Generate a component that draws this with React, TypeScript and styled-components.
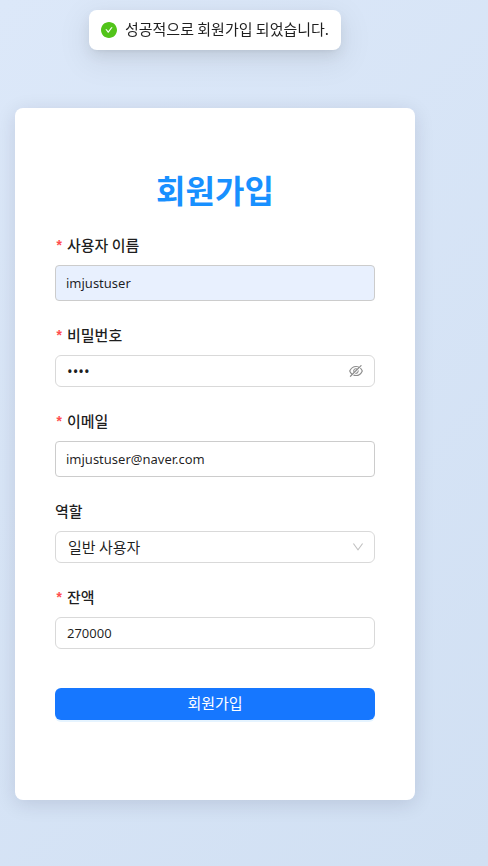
import React, { useState } from "react";
import styled, { createGlobalStyle, css } from "styled-components";

const fontStack = '"Noto Sans", "Noto Sans CJK KR", sans-serif';

const GlobalStyle = createGlobalStyle`
  *, *::before, *::after { box-sizing: border-box; }
  body {
    margin: 0;
    font-family: "Noto Sans CJK KR", sans-serif;
    color: rgba(0, 0, 0, 0.88);
  }
`;

const Page = styled.main`
  min-height: 100vh;
  padding: 108px 73px 66px 15px;
  background: linear-gradient(135deg, #dce8f9 0%, #d1e0f3 100%);
`;

const ToastLayer = styled.div`
  position: fixed;
  top: 10px;
  left: 15px;
  right: 73px;
  display: flex;
  justify-content: center;
`;

const Toast = styled.div`
  display: flex;
  align-items: center;
  gap: 8px;
  height: 40px;
  padding: 0 12px;
  border-radius: 8px;
  background: #fff;
  font-size: 15px;
  line-height: 20px;
  white-space: nowrap;
  box-shadow: 0 6px 16px rgba(0, 0, 0, 0.08), 0 3px 6px -4px rgba(0, 0, 0, 0.12),
    0 9px 28px 8px rgba(0, 0, 0, 0.05);
`;

const ToastText = styled.span`
  padding-bottom: 2px;
`;

const Card = styled.form`
  display: flex;
  flex-direction: column;
  gap: 24px;
  max-width: 400px;
  margin: 0 auto;
  padding: 60px 40px 80px;
  border-radius: 8px;
  background: #fff;
  box-shadow: 0 4px 20px rgba(0, 0, 50, 0.12);
`;

const Title = styled.h1`
  margin: 0;
  color: #1890ff;
  font-size: 32px;
  font-weight: 700;
  line-height: 43px;
  text-align: center;
`;

const Field = styled.div`
  display: flex;
  flex-direction: column;
  gap: 8px;
`;

const Label = styled.label`
  display: flex;
  gap: 4px;
  padding-bottom: 2px;
  font-size: 15px;
  font-weight: 500;
  line-height: 20px;
`;

const Asterisk = styled.span`
  width: 8px;
  padding-top: 4px;
  color: #ff4d4f;
  font-family: "Liberation Mono", monospace;
  font-size: 14px;
  font-weight: 700;
  line-height: 16px;
`;

const controlBox = css`
  width: 100%;
  border: 1px solid #d9d9d9;
  border-radius: 6px;
  background: #fff;
  color: rgba(0, 0, 0, 0.88);
  outline: none;
`;

const Input = styled.input<{ $tall?: boolean; $filled?: boolean }>`
  ${controlBox}
  height: ${(p) => (p.$tall ? 36 : 32)}px;
  padding: 0 ${(p) => (p.$tall ? 10 : 11)}px;
  border-radius: ${(p) => (p.$tall ? 4 : 6)}px;
  border-color: ${(p) => (p.$tall ? "#ccc" : "#d9d9d9")};
  background: ${(p) => (p.$filled ? "#e8f0fe" : "#fff")};
  font-family: ${fontStack};
  font-size: 13px;
`;

const PasswordBox = styled.div`
  ${controlBox}
  display: flex;
  align-items: center;
  height: 32px;
  padding: 0 11px;
`;

const PasswordInput = styled.input`
  flex: 1;
  min-width: 0;
  padding: 0;
  border: 0;
  outline: none;
  background: transparent;
  color: inherit;
  font-family: ${fontStack};
  font-size: 15px;
`;

const EyeButton = styled.button`
  display: flex;
  padding: 0;
  border: 0;
  background: none;
  color: rgba(0, 0, 0, 0.45);
  cursor: pointer;
`;

const SelectBox = styled.div`
  display: grid;
  align-items: center;

  & > * { grid-area: 1 / 1; }
  & > svg { justify-self: end; margin-right: 11px; pointer-events: none; }
`;

const Select = styled.select`
  ${controlBox}
  appearance: none;
  height: 32px;
  padding: 0 30px 2px 12px;
  font-family: "Noto Sans CJK KR", sans-serif;
  font-size: 15px;
`;

const SubmitButton = styled.button`
  height: 32px;
  margin-top: 15px;
  padding: 0 15px 2px;
  border: 0;
  border-radius: 6px;
  background: #1677ff;
  box-shadow: 0 2px 0 rgba(5, 145, 255, 0.1);
  color: #fff;
  font-family: "Noto Sans CJK KR", sans-serif;
  font-size: 15px;
  line-height: 20px;
  cursor: pointer;
`;

const CheckIcon = () => (
  <svg width="16" height="16" viewBox="64 64 896 896" fill="#52c41a" aria-hidden="true">
    <path d="M512 64C264.6 64 64 264.6 64 512s200.6 448 448 448 448-200.6 448-448S759.4 64 512 64zm193.5 301.7l-210.6 292a31.8 31.8 0 01-51.7 0L318.5 484.9c-3.800-5.300 0-12.700 6.500-12.700h46.900c10.200 0 19.900 4.900 25.900 13.300l71.200 98.800 157.200-218c6-8.300 15.600-13.300 25.900-13.300H699c6.500 0 10.300 7.400 6.500 12.700z" />
  </svg>
);

const EyeOffIcon = () => (
  <svg width="14" height="14" viewBox="64 64 896 896" fill="currentColor" aria-hidden="true">
    <path d="M942.2 486.2Q889.47 375.11 816.7 305l-50.88 50.88C807.31 395.530 843.450 447.400 874.700 512 791.500 684.200 673.400 766 512 766q-72.670 0-133.870-22.380L323 798.750Q408 838 512 838q288.300 0 430.200-300.300a60.290 60.290 0 000-51.500zm-63.570-320.640L836 122.880a8 8 0 00-11.320 0L715.310 232.200Q624.860 186 512 186q-288.300 0-430.200 300.300a60.300 60.300 0 000 51.500q56.690 119.400 136.500 191.410L112.480 835a8 8 0 000 11.310L155.170 889a8 8 0 0011.310 0l712.150-712.120a8 8 0 000-11.320zM149.300 512C232.600 339.800 350.700 258 512 258c54.540 0 104.130 9.360 149.120 28.390l-70.300 70.300a176 176 0 00-238.130 238.130l-83.420 83.420C223.100 637.490 183.300 582.280 149.300 512zm246.700 0a112.110 112.110 0 01146.200-106.690L401.310 546.200A112 112 0 01396 512z" />
    <path d="M508 624c-3.460 0-6.870-.16-10.250-.47l-52.820 52.820a176.090 176.090 0 00227.420-227.420l-52.820 52.820c.31 3.380.47 6.790.47 10.250a111.940 111.940 0 01-112 112z" />
  </svg>
);

const ChevronIcon = () => (
  <svg width="12" height="12" viewBox="64 64 896 896" fill="rgba(0, 0, 0, 0.25)" aria-hidden="true">
    <path d="M884 256h-75c-5.100 0-9.900 2.500-12.900 6.600L512 654.200 227.900 262.600c-3-4.100-7.800-6.600-12.900-6.600h-75c-6.500 0-10.300 7.400-6.500 12.700l352.600 486.100c12.800 17.600 39 17.600 51.700 0l352.600-486.100c3.900-5.300.1-12.700-6.400-12.700z" />
  </svg>
);

const RequiredLabel = ({ htmlFor, children }: { htmlFor: string; children: React.ReactNode }) => (
  <Label htmlFor={htmlFor}>
    <Asterisk aria-hidden="true">*</Asterisk>
    {children}
  </Label>
);

export default function App() {
  const [showPassword, setShowPassword] = useState(false);

  return (
    <>
      <GlobalStyle />
      <ToastLayer>
        <Toast role="status">
          <CheckIcon />
          <ToastText>성공적으로 회원가입 되었습니다.</ToastText>
        </Toast>
      </ToastLayer>
      <Page>
        <Card onSubmit={(e) => e.preventDefault()}>
          <Title>회원가입</Title>
          <Field>
            <RequiredLabel htmlFor="username">사용자 이름</RequiredLabel>
            <Input id="username" $tall $filled required defaultValue="imjustuser" />
          </Field>
          <Field>
            <RequiredLabel htmlFor="password">비밀번호</RequiredLabel>
            <PasswordBox>
              <PasswordInput
                id="password"
                type={showPassword ? "text" : "password"}
                required
                defaultValue="1234"
              />
              <EyeButton
                type="button"
                aria-label="비밀번호 표시"
                aria-pressed={showPassword}
                onClick={() => setShowPassword(!showPassword)}
              >
                <EyeOffIcon />
              </EyeButton>
            </PasswordBox>
          </Field>
          <Field>
            <RequiredLabel htmlFor="email">이메일</RequiredLabel>
            <Input id="email" type="email" $tall required defaultValue="imjustuser@naver.com" />
          </Field>
          <Field>
            <Label htmlFor="role">역할</Label>
            <SelectBox>
              <Select id="role" defaultValue="user">
                <option value="user">일반 사용자</option>
              </Select>
              <ChevronIcon />
            </SelectBox>
          </Field>
          <Field>
            <RequiredLabel htmlFor="balance">잔액</RequiredLabel>
            <Input id="balance" inputMode="numeric" required defaultValue="270000" />
          </Field>
          <SubmitButton type="submit">회원가입</SubmitButton>
        </Card>
      </Page>
    </>
  );
}
